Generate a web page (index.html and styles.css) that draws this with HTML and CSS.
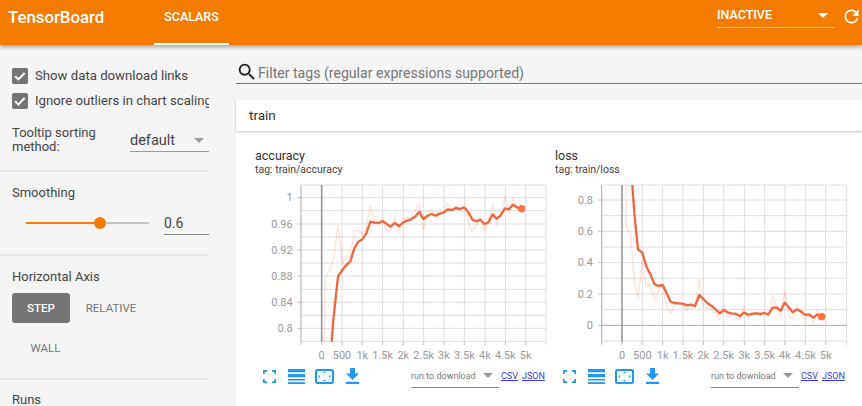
FILE: index.html
```html
<!DOCTYPE html>
<html lang="en">
<head>
    <meta charset="UTF-8">
    <title>TensorBoard</title>
    <link rel="stylesheet" href="styles.css">
</head>
<body>

    <!-- Top bar -->
    <header class="topbar">
        <div class="brand">TensorBoard</div>
        <div class="tab">SCALARS</div>
        <div class="spacer"></div>
        <div class="run-state">
            <span>INACTIVE</span>
            <i class="arrow arrow-white"></i>
        </div>
        <svg class="reload" viewBox="0 0 24 24"><path d="M17.65 6.35A7.96 7.96 0 0 0 12 4a8 8 0 1 0 7.73 10h-2.08A6 6 0 1 1 12 6c1.66 0 3.14.69 4.22 1.78L13 11h7V4l-2.35 2.35z"/></svg>
    </header>

    <div class="page">
        <!-- Sidebar -->
        <aside class="sidebar">
            <section class="side-section options">
                <label class="check"><svg viewBox="0 0 16 16"><rect width="16" height="16" rx="2"/><path d="M3.2 8.2l3.2 3.2 6.2-6.4"/></svg><span>Show data download links</span></label>
                <label class="check"><svg viewBox="0 0 16 16"><rect width="16" height="16" rx="2"/><path d="M3.2 8.2l3.2 3.2 6.2-6.4"/></svg><span>Ignore outliers in chart scaling</span></label>
                <div class="sort-row">
                    <div class="sort-label">Tooltip sorting method:</div>
                    <div class="sort-select"><span>default</span><i class="arrow arrow-grey"></i></div>
                </div>
            </section>

            <section class="side-section smoothing">
                <div class="side-title">Smoothing</div>
                <div class="slider-row">
                    <div class="slider"><div class="slider-fill"></div><div class="slider-thumb"></div></div>
                    <div class="slider-value">0.6</div>
                </div>
            </section>

            <section class="side-section axis">
                <div class="side-title">Horizontal Axis</div>
                <div class="axis-buttons">
                    <div class="axis-btn active">STEP</div>
                    <div class="axis-btn relative">RELATIVE</div>
                    <div class="axis-btn wall">WALL</div>
                </div>
            </section>

            <section class="side-section runs">
                <div class="side-title">Runs</div>
            </section>
        </aside>

        <!-- Main content -->
        <main class="content">
            <div class="filter">
                <svg viewBox="0 0 24 24"><path d="M15.5 14h-.79l-.28-.27A6.47 6.47 0 0 0 16 9.5 6.5 6.5 0 1 0 9.5 16c1.61 0 3.09-.59 4.23-1.57l.27.28v.79l5 4.99L20.49 19l-4.99-5zm-6 0C7.01 14 5 11.99 5 9.5S7.01 5 9.5 5 14 7.01 14 9.5 11.99 14 9.5 14z"/></svg>
                <span>Filter tags (regular expressions supported)</span>
            </div>

            <div class="pane">
                <div class="pane-head">train</div>
                <div class="charts">

                    <!-- Accuracy chart -->
                    <div class="card">
                        <div class="card-title">accuracy</div>
                        <div class="card-tag">tag: train/accuracy</div>
                        <svg class="plot" viewBox="30 33 900 543">
                            <path class="grid" d="M183 45H918M183 83H918M183 122H918M183 162H918M183 201H918M183 240H918M183 279H918M183 318H918M183 358H918M183 397H918M183 436H918M183 475H918M183 514H918M306 45V515M367 45V515M428 45V515M490 45V515M551 45V515M612 45V515M673 45V515M735 45V515M796 45V515M857 45V515M918 45V525"/>
                            <path class="ticks" d="M173 83H183M173 162H183M173 240H183M173 318H183M173 397H183M173 475H183M183 515V525M245 515V525M306 515V525M367 515V525M428 515V525M490 515V525M551 515V525M612 515V525M673 515V525M735 515V525M796 515V525M857 515V525"/>
                            <path class="axis-y" d="M183 45V515"/>
                            <path class="axis-zero" d="M245 45V515"/>
                            <polyline class="raw" points="252,515 257,320 270,300 282,260 294,165 307,280 319,260 331,258 343,182 355,182 367,195 379,170 391,105 404,150 416,160 428,145 440,182 452,183 464,140 477,185 489,145 501,145 513,140 525,125 538,100 550,180 562,125 574,122 587,140 599,125 611,125 623,100 636,125 648,105 660,125 672,105 684,150 697,185 709,165 721,140 733,185 745,155 758,100 770,165 782,130 795,80 807,125 819,85 831,120 845,116"/>
                            <polyline class="smooth" points="275,515 280,450 294,320 307,300 319,285 331,274 343,235 355,215 367,208 379,190 391,155 404,158 416,159 428,153 440,162 452,170 464,159 477,168 489,158 501,152 513,148 525,140 538,125 550,147 562,138 574,132 587,137 599,131 611,128 623,118 636,120 648,114 660,117 672,112 684,125 697,148 709,154 721,149 733,162 745,157 758,133 770,146 782,136 795,115 807,118 819,104 831,112 845,116"/>
                            <circle class="dot" cx="845" cy="116" r="11"/>
                            <g class="y-labels">
                                <text x="158" y="94">1</text>
                                <text x="158" y="173">0.96</text>
                                <text x="158" y="251">0.92</text>
                                <text x="158" y="329">0.88</text>
                                <text x="158" y="408">0.84</text>
                                <text x="158" y="486">0.8</text>
                            </g>
                            <g class="x-labels">
                                <text x="245" y="566">0</text>
                                <text x="306" y="566">500</text>
                                <text x="367" y="566">1k</text>
                                <text x="428" y="566">1.5k</text>
                                <text x="490" y="566">2k</text>
                                <text x="551" y="566">2.5k</text>
                                <text x="612" y="566">3k</text>
                                <text x="673" y="566">3.5k</text>
                                <text x="735" y="566">4k</text>
                                <text x="796" y="566">4.5k</text>
                                <text x="857" y="566">5k</text>
                            </g>
                        </svg>
                        <div class="toolbar">
                            <svg class="tool tool-full" viewBox="0 0 13 13"><path d="M0 4V0h4v1.7H1.7V4zM9 0h4v4h-1.7V1.7H9zM0 9h1.7v2.3H4V13H0zM11.3 9H13v4H9v-1.7h2.3z"/></svg>
                            <svg class="tool tool-lines" viewBox="0 0 17 15"><path d="M0 0h17v3.2H0zM0 5h17v3.2H0zM0 10h17v1.6H0zM0 13.2h17V15H0z"/></svg>
                            <svg class="tool tool-fit" viewBox="0 0 19 15"><rect class="fit-box" x="1" y="1" width="17" height="13" rx="1.5"/><path d="M9.5 2.6l1.5 1.5H8zM9.5 12.4L8 10.9h3zM3.4 7.5l1.5-1.5v3zM15.6 7.5L14.1 9V6z"/></svg>
                            <svg class="tool tool-down" viewBox="0 0 13 16"><path d="M4 0h5v5.5h4L6.5 12 0 5.500h4zM0 13.800h13V16H0z"/></svg>
                            <div class="run-select"><span>run to download</span><i class="arrow arrow-grey"></i></div>
                            <a class="dl" href="#">CSV</a>
                            <a class="dl" href="#">JSON</a>
                        </div>
                    </div>

                    <!-- Loss chart -->
                    <div class="card">
                        <div class="card-title">loss</div>
                        <div class="card-tag">tag: train/loss</div>
                        <svg class="plot" viewBox="15 33 900 543">
                            <path class="grid" d="M170 45H905M170 90H905M170 137H905M170 184H905M170 231H905M170 278H905M170 325H905M170 372H905M170 419H905M170 513H905M292 45V515M353 45V515M414 45V515M475 45V515M536 45V515M598 45V515M659 45V515M720 45V515M781 45V515M842 45V515M905 45V525"/>
                            <path class="ticks" d="M160 90H170M160 184H170M160 278H170M160 372H170M160 466H170M170 515V525M231 515V525M292 515V525M353 515V525M414 515V525M475 515V525M536 515V525M598 515V525M659 515V525M720 515V525M781 515V525M842 515V525"/>
                            <path class="axis-y" d="M170 45V515M170 466H905"/>
                            <path class="axis-zero" d="M231 45V515"/>
                            <polyline class="raw" points="243,45 243,170 256,190 268,330 279,385 292,270 304,350 316,345 328,388 340,365 353,345 365,410 377,430 389,405 401,402 413,402 425,420 438,402 450,412 463,328 475,410 487,415 499,418 512,430 524,448 536,405 548,442 560,435 572,433 585,450 597,410 609,445 621,430 634,428 646,434 658,425 670,437 683,380 695,410 707,442 719,362 731,435 743,450 755,408 768,432 780,452 792,430 805,460 817,420 830,440"/>
                            <polyline class="smooth" points="262,45 268,130 279,238 292,248 304,290 316,312 328,342 340,348 353,345 365,370 377,395 389,399 401,400 413,401 425,406 438,404 450,408 463,375 475,387 487,399 499,407 512,418 524,430 536,420 548,427 560,430 572,431 585,438 597,428 609,434 621,432 634,430 646,432 658,429 670,433 683,413 695,412 707,422 719,398 731,411 743,427 755,418 768,424 780,435 792,433 805,443 817,434 830,440"/>
                            <circle class="dot" cx="830" cy="440" r="11"/>
                            <g class="y-labels">
                                <text x="144" y="101">0.8</text>
                                <text x="144" y="195">0.6</text>
                                <text x="144" y="289">0.4</text>
                                <text x="144" y="383">0.2</text>
                                <text x="144" y="477">0</text>
                            </g>
                            <g class="x-labels">
                                <text x="231" y="566">0</text>
                                <text x="292" y="566">500</text>
                                <text x="353" y="566">1k</text>
                                <text x="414" y="566">1.5k</text>
                                <text x="475" y="566">2k</text>
                                <text x="536" y="566">2.5k</text>
                                <text x="598" y="566">3k</text>
                                <text x="659" y="566">3.5k</text>
                                <text x="720" y="566">4k</text>
                                <text x="781" y="566">4.5k</text>
                                <text x="842" y="566">5k</text>
                            </g>
                        </svg>
                        <div class="toolbar">
                            <svg class="tool tool-full" viewBox="0 0 13 13"><path d="M0 4V0h4v1.7H1.7V4zM9 0h4v4h-1.7V1.7H9zM0 9h1.7v2.3H4V13H0zM11.3 9H13v4H9v-1.7h2.3z"/></svg>
                            <svg class="tool tool-lines" viewBox="0 0 17 15"><path d="M0 0h17v3.2H0zM0 5h17v3.2H0zM0 10h17v1.6H0zM0 13.2h17V15H0z"/></svg>
                            <svg class="tool tool-fit" viewBox="0 0 19 15"><rect class="fit-box" x="1" y="1" width="17" height="13" rx="1.5"/><path d="M9.5 2.6l1.5 1.5H8zM9.5 12.4L8 10.9h3zM3.4 7.5l1.5-1.5v3zM15.6 7.5L14.1 9V6z"/></svg>
                            <svg class="tool tool-down" viewBox="0 0 13 16"><path d="M4 0h5v5.5h4L6.5 12 0 5.500h4zM0 13.800h13V16H0z"/></svg>
                            <div class="run-select"><span>run to download</span><i class="arrow arrow-grey"></i></div>
                            <a class="dl" href="#">CSV</a>
                            <a class="dl" href="#">JSON</a>
                        </div>
                    </div>

                </div>
            </div>
        </main>
    </div>

</body>
</html>
```

FILE: styles.css
```css
* {
    margin: 0;
    padding: 0;
    box-sizing: border-box;
}
body {
    font-family: Roboto, "Liberation Sans", sans-serif;
    height: 100vh;
    overflow: hidden;
    display: flex;
    flex-direction: column;
    background: #f5f5f5;
    color: #444;
}
.arrow {
    display: block;
    width: 0;
    height: 0;
    border-left: 5px solid transparent;
    border-right: 5px solid transparent;
    border-top: 5px solid #757575;
}
.arrow-white {
    border-top-color: #fff;
}
.arrow-grey {
    border-top-color: #9a9a9a;
}

/* Top bar */
.topbar {
    height: 45px;
    flex: none;
    display: flex;
    align-items: flex-start;
    background: #f57c00;
    color: #fff;
    box-shadow: 0 2px 4px rgba(0, 0, 0, 0.35);
    position: relative;
    z-index: 2;
}
.brand {
    width: 96px;
    margin-left: 8px;
    margin-top: 5px;
    font-size: 16.800px;
    font-weight: 500;
    line-height: 24px;
    white-space: nowrap;
}
.tab {
    margin-left: 50px;
    width: 75px;
    height: 45px;
    padding-top: 9px;
    text-align: center;
    font-size: 12.500px;
    font-weight: 500;
    line-height: 16px;
    border-bottom: 2px solid #fff;
}
.spacer {
    flex: 1;
}
.run-state {
    width: 117px;
    height: 28px;
    padding: 7px 6px 0 0;
    display: flex;
    justify-content: space-between;
    font-size: 12.500px;
    font-weight: 500;
    line-height: 15px;
    border-bottom: 1px solid rgba(255, 255, 255, 0.6);
}
.run-state .arrow {
    margin-top: 6px;
}
.reload {
    width: 21px;
    height: 21px;
    margin: 6px 0 0 7px;
    fill: #fff;
}

/* Sidebar */
.page {
    flex: 1;
    display: flex;
    min-height: 0;
}
.sidebar {
    width: 236px;
    flex: none;
    padding-right: 27px;
    overflow: hidden;
}
.side-section {
    border-bottom: 2px solid #e8e8e8;
    padding-left: 12px;
}
.options {
    height: 127px;
    padding-top: 18px;
}
.check {
    display: flex;
    align-items: center;
    height: 25px;
    font-size: 13.200px;
    white-space: nowrap;
    overflow: hidden;
}
.check svg {
    width: 16px;
    height: 16px;
    flex: none;
    margin-right: 7px;
}
.check rect {
    fill: #757575;
}
.check path {
    fill: none;
    stroke: #fff;
    stroke-width: 2;
}
.sort-row {
    display: flex;
    margin-top: 11px;
}
.sort-label {
    width: 118px;
    padding-top: 2px;
    padding-right: 10px;
    font-size: 13px;
    line-height: 14px;
}
.sort-select {
    width: 79px;
    height: 28px;
    padding-top: 6px;
    padding-right: 5px;
    display: flex;
    justify-content: space-between;
    align-items: center;
    font-size: 14.500px;
    border-bottom: 1px solid #999;
}
.side-title {
    font-size: 13px;
    line-height: 16px;
}
.smoothing {
    height: 84px;
    padding-top: 13px;
}
.slider-row {
    display: flex;
    margin-top: 13px;
}
.slider {
    width: 123px;
    height: 2px;
    margin: 8px 15px 0 14px;
    background: #c4c4c4;
    position: relative;
}
.slider-fill {
    width: 74px;
    height: 2px;
    background: #f57c00;
}
.slider-thumb {
    position: absolute;
    left: 68px;
    top: -5px;
    width: 12px;
    height: 12px;
    border-radius: 50%;
    background: #f57c00;
}
.slider-value {
    width: 45px;
    height: 21px;
    font-size: 14px;
    line-height: 18px;
    border-bottom: 1px solid #888;
}
.axis {
    height: 124px;
    padding-top: 13px;
}
.axis-buttons {
    display: flex;
    flex-wrap: wrap;
    margin-top: 8px;
}
.axis-btn {
    height: 30px;
    font-size: 11.500px;
    line-height: 30px;
    text-align: center;
    color: #777;
}
.axis-btn.active {
    width: 58px;
    background: #757575;
    color: #fff;
    border-radius: 3px;
    font-weight: 500;
}
.relative {
    width: 82px;
}
.wall {
    width: 67px;
    margin-top: 10px;
}
.runs {
    border: none;
    padding-top: 12px;
}

/* Main content */
.content {
    flex: 1;
    min-width: 0;
    display: flex;
    flex-direction: column;
}
.filter {
    height: 22px;
    margin-top: 17px;
    display: flex;
    align-items: center;
    flex: none;
    font-size: 14.100px;
    color: #757575;
    border-bottom: 1px solid #777;
}
.filter svg {
    width: 22px;
    height: 22px;
    margin-bottom: 2px;
    fill: #222;
}
.pane {
    flex: 1;
    margin-top: 16px;
    background: #fff;
}
.pane-head {
    height: 31px;
    padding-left: 13px;
    font-size: 13.500px;
    line-height: 31px;
    color: #333;
    box-shadow: 0 1px 2px rgba(0, 0, 0, 0.25);
}
.charts {
    display: flex;
    padding: 17px 0 0 14px;
}
.card {
    width: 300px;
    flex: none;
}
.card-title {
    padding-left: 5px;
    font-size: 12.500px;
    line-height: 16px;
    color: #333;
}
.card-tag {
    padding-left: 5px;
    font-size: 10.500px;
    line-height: 12px;
    color: #444;
}
.plot {
    display: block;
    width: 300px;
    height: 181px;
    margin-top: 5px;
}
.plot text {
    font-size: 33px;
    fill: #9a9a9a;
}
.grid {
    fill: none;
    stroke: #dedede;
    stroke-width: 3;
}
.ticks {
    fill: none;
    stroke: #bbb;
    stroke-width: 3;
}
.axis-y {
    fill: none;
    stroke: #aaa;
    stroke-width: 3;
}
.axis-zero {
    fill: none;
    stroke: #9a9a9a;
    stroke-width: 5;
}
.raw {
    fill: none;
    stroke: #ff7043;
    stroke-width: 5;
    opacity: 0.17;
}
.smooth {
    fill: none;
    stroke: #f0673d;
    stroke-width: 7;
    stroke-linejoin: round;
}
.dot {
    fill: #ff7043;
}
.y-labels text {
    text-anchor: end;
}
.x-labels text {
    text-anchor: middle;
}

/* Chart toolbar */
.toolbar {
    height: 24px;
    margin-top: 2px;
    display: flex;
    align-items: center;
    padding-left: 13px;
}
.tool {
    flex: none;
    fill: #2196f3;
}
.tool-full {
    width: 13px;
    height: 13px;
}
.tool-lines {
    width: 17px;
    height: 15px;
    margin-left: 12px;
}
.tool-fit {
    width: 19px;
    height: 15px;
    margin-left: 10px;
}
.fit-box {
    fill: #f2f8fe;
    stroke: #2196f3;
    stroke-width: 2;
}
.tool-down {
    width: 13px;
    height: 16px;
    margin-left: 12px;
}
.run-select {
    width: 88px;
    height: 23px;
    margin-left: 52px;
    display: flex;
    align-items: center;
    padding-right: 6px;
    justify-content: space-between;
    font-size: 9px;
    color: #777;
    border-bottom: 1px solid #888;
}
.dl {
    margin-left: 4px;
    font-size: 9px;
    color: #3a3adf;
}
.run-select + .dl {
    margin-left: 2px;
}
```
